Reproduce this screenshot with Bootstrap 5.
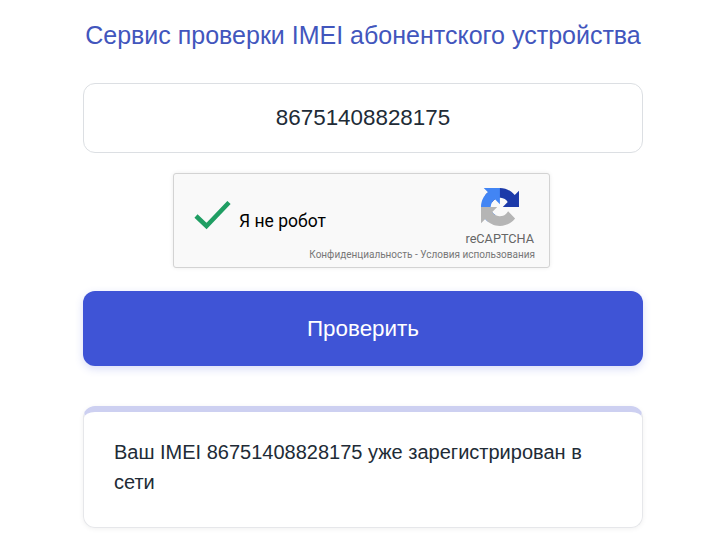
<!DOCTYPE html>
<html lang="ru">
<head>
<meta charset="utf-8">
<title>Сервис проверки IMEI</title>
<link href="https://cdn.jsdelivr.net/npm/bootstrap@5.3.0/dist/css/bootstrap.min.css" rel="stylesheet">
<style>
html,body{height:100%;overflow:hidden}
body{background:#fff;font-family:"Liberation Sans",Arial,sans-serif;color:#212b36}
.imei-wrap{width:560px;margin-left:83px}
.imei-title{font-size:25px;line-height:28px;font-weight:400;color:#4256bd;margin:21px 0 34px;text-align:center;white-space:nowrap}
.imei-input{height:70px;border:1px solid #dcdfe3;border-radius:12px;font-size:22.4px;color:#212b36;text-align:center;box-shadow:none}
.captcha-box{width:377px;height:95px;margin:20px 0 23px 90px;background:#f9f9f9;border:1px solid #d3d3d3;border-radius:3px;box-shadow:0 0 4px rgba(0,0,0,.08);position:relative}
.captcha-check{margin-left:20px;margin-top:27px;flex:none}
.captcha-label{font-family:Roboto,"Liberation Sans",sans-serif;font-size:17.5px;color:#000;margin-left:7px;margin-top:37px;line-height:20px}
.captcha-logo{position:absolute;left:307px;top:14px}
.captcha-brand{font-family:Roboto,"Liberation Sans",sans-serif;position:absolute;right:15px;top:58px;font-size:12.7px;line-height:14px;color:#666}
.captcha-terms{font-family:Roboto,"Liberation Sans",sans-serif;position:absolute;right:14px;top:75px;font-size:10px;line-height:12px;color:#777;white-space:nowrap}
.imei-btn{display:block;width:100%;height:75px;border:0;border-radius:12px;background:#3f54d6;color:#fff;font-size:22.4px;box-shadow:0 3px 8px rgba(63,84,214,.2)}
.imei-btn:hover{background:#3f54d6;color:#fff}
.imei-result{margin-top:40px;height:122px;border:1px solid #e6e7ea;border-top:6px solid #cdd0f1;border-radius:12px;padding:25px 30px;font-size:20px;line-height:30px;color:#212b36;box-shadow:0 1px 5px rgba(0,0,0,.06)}
</style>
</head>
<body>
<div class="imei-wrap">
  <h1 class="imei-title">Сервис проверки IMEI абонентского устройства</h1>
  <input class="form-control imei-input" type="text" value="86751408828175" aria-label="IMEI">
  <div class="captcha-box d-flex">
    <svg class="captcha-check" width="38" height="30" viewBox="0 0 38 30"><path d="M2 15L12.500 25L35 1.500" fill="none" stroke="#1f9e63" stroke-width="4.500"/></svg>
    <div class="captcha-label">Я не робот</div>
    <svg class="captcha-logo" width="38" height="38" viewBox="0 0 64 64">
      <path d="M64 31.955l-.033-1.37V4.687l-7.16 7.16C50.948 4.674 42.033.093 32.05.093c-10.4 0-19.622 4.96-25.458 12.64l11.736 11.86a15.55 15.55 0 0 1 4.754-5.334c2.05-1.6 4.952-2.906 8.968-2.906.485 0 .86.057 1.135.163 4.976.393 9.288 3.14 11.828 7.124l-8.307 8.307 32.294-.001" fill="#1c3aa9"/>
      <path d="M31.862 0l-1.37.033H4.594l7.16 7.16C4.58 13.052 0 21.967 0 31.95c0 10.4 4.96 19.622 12.64 25.458l11.86-11.736a15.55 15.55 0 0 1-5.334-4.754c-1.6-2.05-2.906-4.952-2.906-8.968 0-.485.057-.86.163-1.135.393-4.976 3.14-9.288 7.124-11.828l8.307 8.307L31.862 0" fill="#4285f4"/>
      <path d="M.001 32l.033 1.37v25.898l7.16-7.16c5.86 7.173 14.774 11.754 24.76 11.754 10.4 0 19.622-4.96 25.458-12.64l-11.736-11.86a15.55 15.55 0 0 1-4.754 5.334c-2.05 1.6-4.952 2.906-8.968 2.906-.485 0-.86-.057-1.135-.163-4.976-.393-9.288-3.14-11.828-7.124l8.307-8.307L0 32" fill="#b5b5b5"/>
    </svg>
    <div class="captcha-brand">reCAPTCHA</div>
    <div class="captcha-terms">Конфиденциальность - Условия использования</div>
  </div>
  <button type="button" class="btn imei-btn">Проверить</button>
  <div class="imei-result">Ваш IMEI 86751408828175 уже зарегистрирован в сети</div>
</div>
<script src="https://cdn.jsdelivr.net/npm/bootstrap@5.3.0/dist/js/bootstrap.bundle.min.js"></script>
</body>
</html>
